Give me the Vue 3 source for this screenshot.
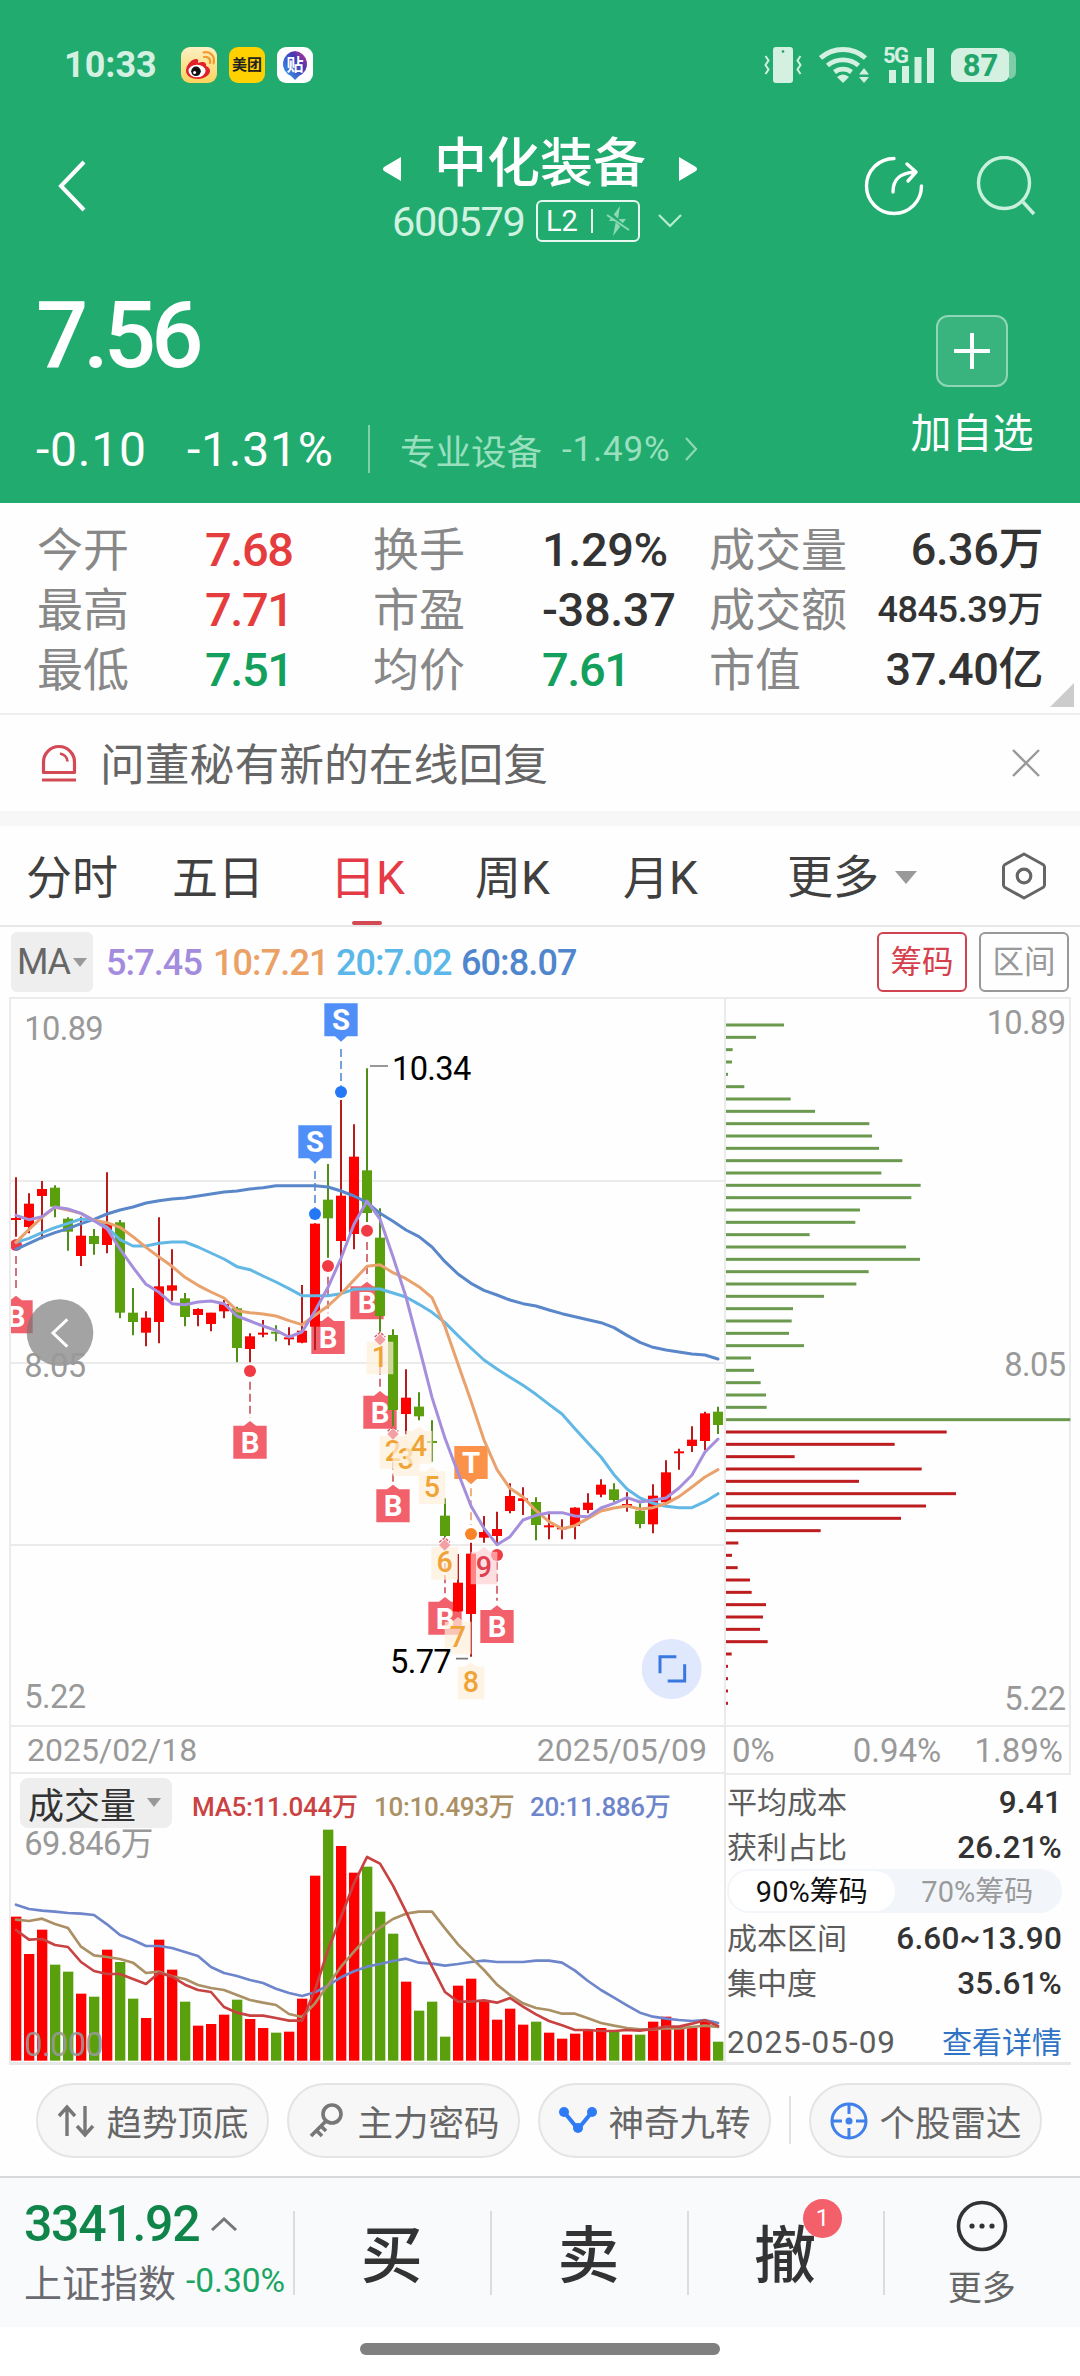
<template>
  <div class="stock-page">
    <header class="quote-header">
      <div class="status-bar">
        <div class="status-left">
          <span class="clock">10:33</span>
          <span class="app-icon weibo">
            <svg viewBox="0 0 36 36" width="36" height="36">
              <path d="M5 24C5 17 12 11 16 12c2 1 1 3 1 4 4-2 9-1 8 3 3 1 4 3 4 5 0 4-6 8-12 8S5 29 5 24z" fill="#e0202a" />
              <ellipse cx="16" cy="24" rx="8.5" ry="6.3" fill="#fff" />
              <circle cx="15" cy="24.3" r="4.8" fill="#111" />
              <circle cx="13.6" cy="25.6" r="1.5" fill="#fff" />
              <path d="M23 10c4-1 7 2 6 6M22.500 5.500c7-1.500 12 4 10 11" fill="none" stroke="#f39a2b" stroke-width="2.200" stroke-linecap="round" />
            </svg>
          </span>
          <span class="app-icon meituan">美团</span>
          <span class="app-icon tieba">
            <svg viewBox="0 0 36 36" width="36" height="36">
              <defs>
                <linearGradient id="tb" x1="1" y1="0" x2="0" y2="1">
                  <stop offset="0" stop-color="#e0338a" />
                  <stop offset=".35" stop-color="#4636b4" />
                  <stop offset="1" stop-color="#35a8f5" />
                </linearGradient>
              </defs>
              <path d="M18 4a13 13 0 0 1 4 25l-4 4-4-4A13 13 0 0 1 18 4z" fill="url(#tb)" />
              <text x="18" y="23.500" text-anchor="middle" class="tieba-text">贴</text>
            </svg>
          </span>
        </div>
        <div class="status-right">
          <svg viewBox="0 0 38 36" width="38" height="36" class="vibrate">
            <rect x="9" y="0" width="20" height="36" rx="3" fill="currentColor" />
            <circle cx="19" cy="4.500" r="1.300" fill="#1f9e66" />
            <path d="M1.500 9l3 4.500-3 4.500 3 4.500-3 4.500M36.500 9l-3 4.500 3 4.500-3 4.500 3 4.500" fill="none" stroke="currentColor" stroke-width="2" />
          </svg>
          <svg viewBox="0 0 50 36" width="50" height="36" class="wifi">
            <path d="M1.500 11a34 34 0 0 1 45 0M8.500 18.500a24 24 0 0 1 31 0M15.500 25a14 14 0 0 1 17 0" fill="none" stroke="currentColor" stroke-width="4.800" />
            <path d="M18 30q6-5 12 0l-6 6z" fill="currentColor" />
            <path d="M40 27.500l5-6.500 5 6.500zM40 30l5 6 5-6z" fill="currentColor" />
          </svg>
          <svg viewBox="0 0 52 38" width="52" height="38" class="signal">
            <text x="0" y="17" class="net-text">5G</text>
            <path d="M6 24h7v13H6zM19 20h7v17h-7zM31.500 11h7v26h-7zM44 2h7v35h-7z" fill="currentColor" />
          </svg>
          <div class="battery">87</div>
        </div>
      </div>

      <div class="nav-bar">
        <svg class="back" viewBox="0 0 30 52" width="30" height="52">
          <path d="M27 2L4 26l23 24" fill="none" stroke="currentColor" stroke-width="4" />
        </svg>
        <div class="title-box">
          <div class="title-line">
            <svg viewBox="0 0 18 26" width="18" height="26"><path d="M18 1v24L1 15q-2-2 0-4z" fill="#fff" /></svg>
            <span class="stock-name">中化装备</span>
            <svg viewBox="0 0 18 26" width="18" height="26"><path d="M0 1v24l17-10q2-2 0-4z" fill="#fff" /></svg>
          </div>
          <div class="code-line">
            <span class="stock-code">600579</span>
            <span class="level-box">
              <span>L2</span>
              <i></i>
              <svg viewBox="0 0 24 32" width="24" height="32">
                <path d="M14 1L3 16h7L7 31l13-17h-8z" fill="#8ed9b5" />
                <path d="M2 7l20 19" stroke="#22ab6f" stroke-width="4" />
                <path d="M1 10l22 15" stroke="#8ed9b5" stroke-width="2" />
              </svg>
            </span>
            <svg viewBox="0 0 24 14" width="24" height="14"><path d="M1 1l11 11L23 1" fill="none" stroke="#b9ecd2" stroke-width="2.200" /></svg>
          </div>
        </div>
        <div class="nav-icons">
          <svg viewBox="0 0 60 60" width="60" height="60">
            <path d="M30 2.500A27.500 27.500 0 1 0 57.500 30" fill="none" stroke="currentColor" stroke-width="3.400" stroke-linecap="round" />
            <path d="M29 36c0-12 6-19 22-20M43 8l9 8-8 9" fill="none" stroke="currentColor" stroke-width="3.400" stroke-linecap="round" stroke-linejoin="round" />
          </svg>
          <svg viewBox="0 0 60 60" width="60" height="60" class="search">
            <circle cx="28" cy="27" r="25.500" fill="none" stroke="currentColor" stroke-width="3.400" />
            <path d="M47 46l11 12" stroke="currentColor" stroke-width="3.400" />
          </svg>
        </div>
      </div>

      <div class="price-area">
        <div class="price-left">
          <div class="price">7.56</div>
          <div class="change-line">
            <span class="chg">-0.10</span>
            <span class="chg pct">-1.31%</span>
            <i class="sep"></i>
            <span class="industry">专业设备</span>
            <span class="industry-pct">-1.49%</span>
            <svg viewBox="0 0 14 24" width="14" height="24"><path d="M2 1l10 11L2 23" fill="none" stroke="#8ed9b5" stroke-width="2.200" /></svg>
          </div>
        </div>
        <div class="watch">
          <span class="watch-btn">
            <svg viewBox="0 0 36 36" width="36" height="36"><path d="M18 1v34M1 18h34" stroke="#fff" stroke-width="4" stroke-linecap="round" /></svg>
          </span>
          <span class="watch-text">加自选</span>
        </div>
      </div>
    </header>

    <section class="stats">
      <template v-for="s in stats" :key="s.label">
        <span class="stat-label">{{ s.label }}</span>
        <span class="stat-value" :class="s.cls">{{ s.value }}</span>
      </template>
      <i class="corner"></i>
    </section>

    <section class="notice">
      <svg viewBox="0 0 36 38" width="36" height="38">
        <path d="M2.500 28.500V18a15.500 15.500 0 0 1 31 0v10.500zM1 36h34" fill="none" stroke="#d34a55" stroke-width="3.200" stroke-linejoin="round" />
        <path d="M19 9.500q7 1.500 7.500 8" fill="none" stroke="#d34a55" stroke-width="2.600" />
      </svg>
      <span class="notice-text">问董秘有新的在线回复</span>
      <svg viewBox="0 0 28 28" width="28" height="28"><path d="M1 1l26 26M27 1L1 27" stroke="#999" stroke-width="2.400" /></svg>
    </section>

    <nav class="tabs">
      <span v-for="t in tabs" :key="t" class="tab" :class="{ active: t === activeTab }">{{ t }}</span>
      <span class="tab more">更多<i class="caret"></i></span>
      <svg viewBox="0 0 44 48" width="44" height="48">
        <path d="M22 2l19 10.500q1.500 1 1.500 2.500v18q0 1.500-1.500 2.500L22 46 3 35.500Q1.500 34.500 1.500 33V15q0-1.500 1.500-2.500z" fill="none" stroke="#666" stroke-width="3" stroke-linejoin="round" />
        <circle cx="22" cy="24" r="6.800" fill="none" stroke="#666" stroke-width="3.200" />
      </svg>
    </nav>

    <div class="ma-bar">
      <span class="ma-chip">MA<i class="caret small"></i></span>
      <span class="ma-values">
        <span v-for="m in maValues" :key="m.text" :style="{ color: m.color, width: m.w + 'px' }">{{ m.text }}</span>
      </span>
      <span class="tool-btn on">筹码</span>
      <span class="tool-btn">区间</span>
    </div>

    <div class="charts">
      <div class="chart-left">
        <!-- plot units are a third of a pixel -->
        <svg class="kline" viewBox="33 21 2139 2190" width="713" height="730">
          <path d="M33 24H2172M33 573H2172M33 1119H2172M33 1665H2172M33 2208H2172" stroke="#ebebeb" stroke-width="6" />

          <g v-for="(m, i) in markers" :key="'m' + i">
            <line :x1="m.x" :x2="m.x" :y1="m.from" :y2="m.to" :stroke="m.line" stroke-width="5" stroke-dasharray="24 12" />
            <circle v-if="m.dot" :cx="m.x" :cy="m.dot" r="18" :fill="m.dotColor" />
            <path :d="tagPath(m.x, m.y, 50, 99, m.down)" :fill="m.fill" />
            <text :x="m.x" :y="m.y + 81" text-anchor="middle" class="mark">{{ m.t }}</text>
          </g>

          <g v-for="(c, i) in candles" :key="'c' + i">
            <line :x1="px(i)" :x2="px(i)" :y1="c[0]" :y2="c[1]" :stroke="c[4] ? '#b81c1c' : '#4f8f17'" stroke-width="6" />
            <rect :x="px(i) - 15" :y="c[2]" width="30" :height="c[3] - c[2]" :fill="c[4] ? '#fe0000' : '#5a9f0c'" />
          </g>

          <g v-for="n in counts" :key="'n' + n.t">
            <path :d="tagPath(n.x, n.y, 40, 98, false)" :fill="n.t === 9 ? 'rgba(255,205,208,.65)' : 'rgba(254,239,218,.7)'" />
            <text :x="n.x" :y="n.y + 76" text-anchor="middle" class="count" :fill="n.t === 9 ? '#e04050' : '#f0a336'">{{ n.t }}</text>
            <path v-if="n.d" :d="`M${n.x} ${n.y - 23}l17 17-17 17-17-17z`" fill="#f3a0a5" />
            <path v-if="n.d" :d="`M${n.x - 16} ${n.y - 14}l16-14 16 14`" fill="none" stroke="#d4525c" stroke-width="4" stroke-dasharray="9 4" />
          </g>

          <polyline v-for="l in maLines" :key="l.color" :points="linePoints(l.pts)" fill="none" :stroke="l.color" stroke-width="9" stroke-linejoin="round" stroke-linecap="round" />

          <path d="M1110 228h54M1368 2006h36" stroke="#777" stroke-width="5" />
          <text x="1176" y="270" class="peak">10.34</text>
          <text x="1170" y="2049" class="peak">5.77</text>

          <circle cx="180" cy="1028" r="100" fill="rgba(120,120,120,.68)" />
          <path d="M202 988l-43 41 43 41" fill="none" stroke="#fff" stroke-width="9" />
          <text x="73" y="150" class="axis">10.89</text>
          <text x="73" y="1160" class="axis">8.05</text>
          <text x="73" y="2153" class="axis">5.22</text>

          <circle cx="2015" cy="2037" r="90" fill="#dfe8fc" />
          <path d="M1980 2050v-50h49M2003 2073h51v-50" fill="none" stroke="#3a78e0" stroke-width="9" />
        </svg>
        <div class="date-row">
          <span>2025/02/18</span>
          <span>2025/05/09</span>
        </div>
        <div class="vol-head">
          <span class="vol-chip">成交量<i class="caret small"></i></span>
          <span class="vm v5">MA5:11.044万</span>
          <span class="vm v10">10:10.493万</span>
          <span class="vm v20">20:11.886万</span>
        </div>
        <svg class="volume" viewBox="33 384 2139 705" width="713" height="235">
          <text x="73" y="465" class="axis">69.846万</text>
          <rect v-for="(v, i) in volumes" :key="i" :x="px(i) - 15" :y="v" width="31" :height="1082 - v" :fill="candles[i][4] ? '#fe0000' : '#5a9f0c'" />
          <polyline v-for="l in volLines" :key="l.color" :points="linePoints(l.pts)" fill="none" :stroke="l.color" stroke-width="8" stroke-linejoin="round" stroke-linecap="round" />
          <text x="73" y="1067" class="axis zero">0.000</text>
        </svg>
      </div>

      <div class="chart-right">
        <svg class="chips" viewBox="78 21 1035 2190" width="345" height="730">
          <path d="M78 24H1113M1110 24V2211M78 2208H1113" fill="none" stroke="#ebebeb" stroke-width="6" />
          <rect v-for="(c, i) in chipEnds" :key="i" x="78" :y="100.5 + i * 37" :width="c - 78" height="9" :fill="i < 33 ? '#6b9a4f' : '#bd1d1f'" />
          <text x="1096" y="132" text-anchor="end" class="axis">10.89</text>
          <text x="1096" y="1158" text-anchor="end" class="axis">8.05</text>
          <text x="1096" y="2160" text-anchor="end" class="axis">5.22</text>
        </svg>
        <div class="pct-row">
          <span>0%</span>
          <span>0.94%</span>
          <span>1.89%</span>
        </div>
        <div class="chip-info">
          <div class="info-row"><span>平均成本</span><b>9.41</b></div>
          <div class="info-row"><span>获利占比</span><b>26.21%</b></div>
          <div class="switch">
            <span class="on">90%筹码</span>
            <span>70%筹码</span>
          </div>
          <div class="info-row"><span>成本区间</span><b>6.60~13.90</b></div>
          <div class="info-row"><span>集中度</span><b>35.61%</b></div>
          <div class="info-row foot"><span class="day">2025-05-09</span><a>查看详情</a></div>
        </div>
      </div>
    </div>

    <div class="tools">
      <span class="pill">
        <svg viewBox="0 0 40 40" width="40" height="40"><path d="M11 35V6M3 15l8-9 8 9M29 5v29M21 25l8 9 8-9" fill="none" stroke="#777" stroke-width="3.400" /></svg>
        趋势顶底
      </span>
      <span class="pill">
        <svg viewBox="0 0 40 40" width="40" height="40">
          <circle cx="25" cy="13" r="9" fill="none" stroke="#777" stroke-width="3.600" />
          <path d="M19 20L4 35M9 29l6 6M14 25l5 5" fill="none" stroke="#777" stroke-width="3.600" />
        </svg>
        主力密码
      </span>
      <span class="pill">
        <svg viewBox="0 0 40 40" width="40" height="40">
          <path d="M6 11l14 17L34 11" fill="none" stroke="#2f7bf5" stroke-width="4" />
          <circle cx="6" cy="11" r="5" fill="#2f7bf5" /><circle cx="20" cy="27" r="5" fill="#2f7bf5" /><circle cx="34" cy="11" r="5" fill="#2f7bf5" />
        </svg>
        神奇九转
      </span>
      <i class="pill-sep"></i>
      <span class="pill">
        <svg viewBox="0 0 40 40" width="40" height="40">
          <circle cx="20" cy="20" r="17" fill="none" stroke="#3f80ea" stroke-width="3" />
          <path d="M20 2v11M20 27v11M2 20h11M27 20h11" stroke="#3f80ea" stroke-width="3" />
          <circle cx="20" cy="20" r="3.500" fill="#3f80ea" />
        </svg>
        个股雷达
      </span>
    </div>

    <footer class="trade-bar">
      <div class="index">
        <div class="index-line">
          <span class="index-val">3341.92</span>
          <svg viewBox="0 0 26 14" width="26" height="14"><path d="M1 13L13 2l12 11" fill="none" stroke="#777" stroke-width="3" /></svg>
        </div>
        <div class="index-line name">
          <span>上证指数</span>
          <span class="index-pct">-0.30%</span>
        </div>
      </div>
      <div class="action">买</div>
      <div class="action">卖</div>
      <div class="action"><span class="act-text">撤<em class="badge">1</em></span></div>
      <div class="action more-act">
        <svg viewBox="0 0 52 52" width="52" height="52">
          <circle cx="26" cy="26" r="23.500" fill="none" stroke="#333" stroke-width="3.600" />
          <circle cx="16" cy="26" r="2.600" fill="#333" /><circle cx="26" cy="26" r="2.600" fill="#333" /><circle cx="36" cy="26" r="2.600" fill="#333" />
        </svg>
        <span>更多</span>
      </div>
    </footer>
    <div class="home-area"><i></i></div>
  </div>
</template>

<script setup>
import { ref } from 'vue';

const activeTab = ref('日K');
const tabs = ['分时', '五日', '日K', '周K', '月K'];

const stats = [
  { label: '今开', value: '7.68', cls: 'up' },
  { label: '换手', value: '1.29%' },
  { label: '成交量', value: '6.36万', cls: 'right' },
  { label: '最高', value: '7.71', cls: 'up' },
  { label: '市盈', value: '-38.37' },
  { label: '成交额', value: '4845.39万', cls: 'right small' },
  { label: '最低', value: '7.51', cls: 'down' },
  { label: '均价', value: '7.61', cls: 'down' },
  { label: '市值', value: '37.40亿', cls: 'right' }
];

const maValues = [
  { text: '5:7.45', color: '#a38bdd', w: 107 },
  { text: '10:7.21', color: '#eba166', w: 123 },
  { text: '20:7.02', color: '#5bb7e8', w: 125 },
  { text: '60:8.07', color: '#5086cd', w: 120 }
];

// [high, low, body top, body bottom, rising]
const candles = [
  [562, 740, 684, 690, 1], [610, 730, 641, 711, 1], [573, 748, 597, 618, 1], [586, 682, 593, 650, 0],
  [682, 782, 686, 725, 0], [680, 828, 737, 798, 1], [717, 794, 738, 762, 0], [547, 790, 700, 765, 1],
  [690, 985, 697, 968, 0], [894, 1036, 968, 996, 0], [964, 1069, 983, 1028, 1], [682, 1060, 889, 996, 1],
  [778, 932, 886, 902, 1], [909, 1009, 925, 981, 0], [955, 1009, 957, 975, 1], [968, 1024, 968, 1002, 1],
  [930, 985, 942, 964, 1], [950, 1117, 955, 1074, 0], [1030, 1117, 1039, 1077, 1], [990, 1042, 1028, 1034, 1],
  [1006, 1054, 1025, 1031, 0], [1012, 1066, 1042, 1048, 1], [885, 1060, 1022, 1058, 1], [700, 1080, 701, 1010, 1],
  [522, 803, 629, 685, 0], [330, 905, 617, 753, 1], [403, 778, 500, 732, 1], [235, 696, 541, 669, 0],
  [655, 1025, 743, 978, 0], [1018, 1308, 1035, 1260, 0], [1138, 1333, 1223, 1272, 1], [1207, 1291, 1250, 1279, 0],
  [1291, 1415, 1353, 1359, 0], [1525, 1642, 1577, 1638, 0], [1692, 1865, 1778, 1864, 1], [1658, 2000, 1691, 1872, 1],
  [1578, 1658, 1626, 1643, 1], [1565, 1660, 1617, 1638, 1], [1480, 1570, 1518, 1563, 1], [1492, 1575, 1525, 1533, 1],
  [1522, 1651, 1536, 1605, 0], [1565, 1648, 1606, 1612, 1], [1588, 1648, 1612, 1618, 1], [1552, 1648, 1553, 1608, 1],
  [1510, 1570, 1538, 1560, 1], [1468, 1522, 1484, 1514, 1], [1480, 1535, 1498, 1530, 0], [1507, 1565, 1542, 1548, 1],
  [1540, 1615, 1562, 1602, 0], [1483, 1630, 1517, 1603, 1], [1411, 1545, 1447, 1537, 1], [1376, 1439, 1384, 1390, 1],
  [1309, 1386, 1349, 1368, 1], [1265, 1380, 1270, 1353, 1], [1250, 1332, 1265, 1305, 0]
];

const maLines = [
  {
    color: '#5a87c9',
    pts: [778, 760, 742, 728, 716, 701, 688, 672, 660, 651, 639, 632, 627, 624, 618, 612, 606, 603, 597, 593, 587, 587, 587, 587, 591, 603, 618, 637, 670, 694, 720, 740, 771, 815, 852, 880, 901, 915, 930, 941, 948, 960, 971, 980, 989, 998, 1013, 1036, 1057, 1072, 1080, 1086, 1092, 1095, 1107]
  },
  {
    color: '#62b8e4',
    pts: [757, 745, 728, 713, 700, 687, 690, 712, 749, 768, 768, 760, 756, 756, 771, 789, 807, 830, 839, 858, 876, 896, 917, 917, 917, 911, 898, 897, 897, 909, 921, 943, 967, 998, 1037, 1074, 1110, 1137, 1162, 1186, 1213, 1243, 1272, 1316, 1359, 1401, 1454, 1497, 1524, 1540, 1549, 1553, 1553, 1535, 1511]
  },
  {
    color: '#e9a26d',
    pts: [757, 718, 682, 652, 660, 670, 691, 698, 712, 740, 772, 801, 829, 862, 886, 906, 924, 962, 968, 972, 978, 992, 1004, 976, 948, 912, 870, 829, 824, 848, 866, 890, 923, 1010, 1122, 1233, 1350, 1439, 1495, 1521, 1562, 1595, 1616, 1607, 1585, 1563, 1554, 1548, 1557, 1553, 1541, 1520, 1491, 1461, 1439]
  },
  {
    color: '#a58fdc',
    pts: [676, 689, 680, 651, 657, 670, 692, 716, 777, 832, 883, 907, 941, 944, 936, 933, 941, 978, 993, 1008, 1021, 1041, 1026, 963, 892, 805, 703, 633, 687, 800, 921, 1070, 1222, 1345, 1448, 1548, 1615, 1664, 1640, 1590, 1576, 1568, 1568, 1578, 1580, 1554, 1540, 1523, 1536, 1530, 1524, 1494, 1455, 1386, 1347]
  }
];

const volumes = [
  650, 762, 689, 794, 815, 881, 890, 749, 786, 896, 954, 719, 809, 905, 977, 972, 944, 899, 957, 984,
  998, 995, 896, 527, 389, 438, 518, 500, 635, 701, 845, 932, 905, 1010, 857, 836, 905, 959, 926, 974,
  965, 998, 1016, 1001, 989, 984, 992, 1004, 1004, 965, 950, 985, 983, 965, 1025
];

const volLines = [
  {
    color: '#6d85ca',
    pts: [614, 627, 632, 635, 639, 641, 645, 673, 705, 720, 738, 738, 744, 756, 768, 801, 819, 828, 840, 849, 866, 879, 888, 877, 856, 832, 814, 800, 792, 783, 776, 788, 791, 797, 792, 786, 782, 786, 786, 786, 782, 782, 788, 812, 843, 870, 893, 916, 938, 950, 956, 960, 963, 960, 969]
  },
  {
    color: '#ab9065',
    pts: [659, 663, 656, 672, 684, 740, 766, 771, 777, 788, 819, 815, 829, 837, 855, 864, 870, 885, 900, 908, 915, 942, 951, 910, 855, 800, 755, 712, 683, 657, 641, 635, 635, 685, 733, 772, 810, 854, 885, 910, 924, 930, 941, 941, 955, 969, 977, 984, 988, 988, 985, 985, 981, 977, 981]
  },
  {
    color: '#c84242',
    pts: [690, 719, 717, 735, 741, 786, 813, 822, 822, 837, 852, 818, 830, 854, 870, 876, 921, 938, 947, 947, 954, 962, 962, 870, 750, 650, 550, 471, 491, 557, 635, 720, 800, 876, 905, 905, 901, 908, 894, 920, 943, 963, 976, 990, 990, 993, 993, 990, 992, 987, 980, 980, 971, 961, 978]
  }
];

const chipEnds = [
  252, 168, 98, 96, 84, 133, 272, 345, 508, 516, 537, 607, 544, 662, 634, 480, 466, 329, 618, 660,
  506, 469, 372, 279, 275, 267, 312, 153, 162, 182, 198, 200, 1111,
  740, 584, 284, 665, 477, 768, 678, 603, 362, 115, 96, 113, 150, 155, 198, 189, 180, 203, 95, 84, 84, 84, 84
];

const sell = { t: 'S', fill: '#4f8ff7', line: '#5a8ed8', dotColor: '#2478f5', down: true };
const buy = { t: 'B', fill: '#f1606b', line: '#cc5560', dotColor: '#f03a44', down: false };
const markers = [
  { ...sell, x: 1023, y: 40, from: 177, to: 287, dot: 306 },
  { ...sell, x: 945, y: 406, from: 543, to: 655, dot: 672 },
  { ...buy, x: 48, y: 931, from: 798, to: 905, dot: 765 },
  { ...buy, x: 750, y: 1307, from: 1175, to: 1284, dot: 1143 },
  { ...buy, x: 984, y: 993, from: 860, to: 970, dot: 828 },
  { ...buy, x: 1101, y: 889, from: 756, to: 865, dot: 722 },
  { ...buy, x: 1140, y: 1217, from: 1130, to: 1192 },
  { ...buy, x: 1179, y: 1498, from: 1415, to: 1475 },
  { ...buy, x: 1335, y: 1835, from: 1720, to: 1810 },
  { ...buy, x: 1491, y: 1860, from: 1715, to: 1832, dot: 1695 },
  { t: 'T', fill: '#fb924a', line: '#e9a26d', dotColor: '#f98427', down: true, x: 1413, y: 1368, from: 1495, to: 1605, dot: 1632 }
];

// nine-turn sequence numbers, d marks the ones that carry a buy dot
const counts = [
  { t: 1, x: 1140, y: 1055, d: true },
  { t: 2, x: 1179, y: 1338, d: true },
  { t: 3, x: 1218, y: 1360 },
  { t: 4, x: 1257, y: 1323 },
  { t: 5, x: 1296, y: 1444 },
  { t: 6, x: 1334, y: 1671, d: true },
  { t: 7, x: 1374, y: 1895 },
  { t: 8, x: 1413, y: 2030 },
  { t: 9, x: 1452, y: 1685 }
];

function px(i) {
  return 48 + i * 39;
}

function linePoints(pts) {
  return pts.map((y, i) => `${px(i)},${y}`).join(' ');
}

function tagPath(x, y, half, h, down) {
  if (down) {
    return `M${x - half} ${y}h${half * 2}v${h}h${-(half - 18)}l-18 16-18-16h${-(half - 18)}z`;
  }
  return `M${x - half} ${y}h${half - 18}l18-14 18 14h${half - 18}v${h}h${-half * 2}z`;
}
</script>

<style>
html,
body {
  margin: 0;
  background: #fff;
}
</style>

<style scoped>
.stock-page {
  width: 1080px;
  height: 2376px;
  overflow: hidden;
  background: #fefefe;
  font-family: Roboto, 'Noto Sans CJK SC', sans-serif;
  color: #333;
  white-space: nowrap;
}

.stock-page svg {
  display: block;
  flex: none;
}

i,
em,
b {
  font-style: normal;
  font-weight: 400;
}

/* header */
.quote-header {
  height: 503px;
  background: #22ab6f;
  color: #fff;
}

.status-bar {
  height: 130px;
  display: flex;
  align-items: center;
  justify-content: space-between;
  padding: 0 63px 0 64px;
  box-sizing: border-box;
  color: #d3f0e1;
}

.status-left,
.status-right {
  display: flex;
  align-items: center;
}

.clock {
  width: 117px;
  font-size: 36px;
  font-weight: 700;
  line-height: 40px;
}

.app-icon {
  width: 36px;
  height: 36px;
  border-radius: 9px;
  margin-right: 12px;
  overflow: hidden;
}

.weibo {
  background: linear-gradient(#fdf0c4, #fbd35c);
}

.meituan {
  background: #ffd100;
  color: #222;
  font-size: 15px;
  font-weight: 700;
  line-height: 36px;
  text-align: center;
}

.tieba {
  background: #fff;
}

.tieba-text {
  font-size: 17px;
  font-weight: 700;
  fill: #fff;
}

.vibrate {
  margin-right: 17px;
}

.wifi {
  margin-right: 14px;
}

.stock-page .signal,
.stock-page .volume {
  overflow: visible;
}

.signal {
  margin-right: 16px;
}

.net-text {
  font-size: 22px;
  font-weight: 700;
  letter-spacing: -1.5px;
  fill: currentColor;
}

.battery {
  position: relative;
  width: 59px;
  height: 34px;
  margin-right: 7px;
  border-radius: 9px;
  background: #d3f0e1;
  color: #22a56b;
  font-size: 31px;
  font-weight: 700;
  line-height: 35px;
  text-align: center;
}

.battery::after {
  content: '';
  position: absolute;
  left: 58px;
  top: 3px;
  width: 7px;
  height: 28px;
  border-radius: 0 8px 8px 0;
  background: #7fcca8;
}

.nav-bar {
  height: 118px;
  display: grid;
  grid-template-columns: 270px 1fr 270px;
}

.back {
  margin: 30px 0 0 57px;
}

.title-box {
  display: flex;
  flex-direction: column;
  align-items: center;
}

.title-line {
  height: 66px;
  display: flex;
  align-items: center;
  gap: 33px;
}

.title-line svg {
  margin-top: 12px;
}

.stock-name {
  padding-top: 2px;
  font-size: 53px;
  font-weight: 500;
  line-height: 66px;
}

.code-line {
  height: 50px;
  display: flex;
  align-items: center;
  margin-right: 6px;
}

.stock-code {
  width: 144px;
  padding-top: 2px;
  font-size: 41.5px;
  letter-spacing: -1.2px;
  line-height: 48px;
  color: #d0f2e0;
}

.level-box {
  width: 104px;
  height: 42px;
  box-sizing: border-box;
  margin: 0 18px 0 0;
  padding: 0 8px;
  border: 2px solid #e6f8ef;
  border-radius: 6px;
  display: flex;
  align-items: center;
  justify-content: space-between;
  font-size: 29px;
  line-height: 38px;
}

.level-box i {
  width: 2px;
  height: 24px;
  background: #e6f8ef;
}

.nav-icons {
  display: flex;
  gap: 52px;
  padding: 26px 0 0 54px;
}

.search {
  color: #c9f0dc;
}

.price-area {
  display: flex;
  justify-content: space-between;
}

.price-left {
  padding-left: 36px;
}

.price {
  margin-top: 39px;
  height: 98px;
  font-size: 92px;
  font-weight: 500;
  line-height: 98px;
  letter-spacing: -5px;
}

.change-line {
  margin-top: 36px;
  height: 56px;
  display: flex;
  align-items: center;
}

.chg {
  width: 151px;
  font-size: 48px;
  letter-spacing: 0.8px;
}

.chg.pct {
  width: 181px;
}

.sep {
  width: 2px;
  height: 48px;
  margin-right: 30px;
  background: #7fd1aa;
}

.industry {
  font-size: 35.5px;
  color: #9ae0bf;
}

.industry-pct {
  width: 122px;
  margin-left: 20px;
  font-size: 35px;
  letter-spacing: 0.8px;
  color: #9ae0bf;
}

.watch {
  width: 124px;
  margin: 67px 46px 0 0;
  display: flex;
  flex-direction: column;
  align-items: center;
}

.watch-btn {
  width: 72px;
  height: 72px;
  box-sizing: border-box;
  border: 2px solid #90d6b6;
  border-radius: 12px;
  background: #3ab47f;
  display: flex;
  align-items: center;
  justify-content: center;
}

.watch-text {
  margin-top: 19px;
  font-size: 41px;
  line-height: 56px;
}

/* stats */
.stats {
  position: relative;
  height: 212px;
  box-sizing: border-box;
  padding: 17px 37px 0 37px;
  border-bottom: 2px solid #eee;
  display: grid;
  grid-template-columns: 168px 168px 169px 167px 150px 1fr;
  grid-auto-rows: 60px;
  line-height: 60px;
}

.stat-label {
  font-size: 46px;
  color: #888;
}

.stat-value {
  font-size: 47px;
  font-weight: 500;
  letter-spacing: -0.4px;
}

.up,
.down {
  letter-spacing: -1.4px;
}

.up {
  color: #e53d3d;
}

.down {
  color: #12a05c;
}

.right {
  display: flex;
  justify-content: flex-end;
  font-size: 45px;
}

.right.small {
  font-size: 36px;
}

.corner {
  position: absolute;
  right: 6px;
  bottom: 6px;
  border-left: 24px solid transparent;
  border-bottom: 24px solid #ccc;
}

/* notice */
.notice {
  height: 96px;
  padding: 0 40px 0 41px;
  border-bottom: 15px solid #f7f7f7;
  display: flex;
  align-items: center;
}

.notice-text {
  flex: 1;
  margin-left: 23px;
  padding-top: 5px;
  font-size: 44.8px;
  line-height: 60px;
  color: #666;
}

/* tabs */
.tabs {
  height: 101px;
  box-sizing: border-box;
  padding: 0 34px 0 26px;
  border-bottom: 2px solid #e8e8e8;
  display: grid;
  grid-template-columns: 146px 161px 142px 148px 164px 1fr 44px;
  align-items: center;
}

.tab {
  position: relative;
  height: 99px;
  box-sizing: border-box;
  padding-top: 4px;
  justify-self: start;
  font-size: 46px;
  line-height: 97px;
  color: #404040;
}

.tab:nth-child(3) {
  margin-left: -3px;
}

.tab.active {
  color: #e43b47;
}

.tab.active::after {
  content: '';
  position: absolute;
  left: 50%;
  bottom: 0;
  width: 30px;
  height: 4px;
  margin-left: -15px;
  border-radius: 2px;
  background: #d34a55;
}

.more {
  display: flex;
  align-items: center;
}

.caret {
  margin-left: 16px;
  border: 11px solid transparent;
  border-top: 13px solid #999;
  border-bottom: 0;
}

.caret.small {
  margin-left: 3px;
  border-width: 9px 7px 0;
}

/* MA bar */
.ma-bar {
  height: 70px;
  padding: 0 11px;
  display: flex;
  align-items: center;
}

.ma-chip {
  width: 82px;
  height: 60px;
  border-radius: 6px;
  background: #eee;
  display: flex;
  align-items: center;
  justify-content: center;
  font-size: 36px;
  letter-spacing: -1px;
  color: #666;
}

.ma-values {
  flex: 1;
  display: flex;
  margin-left: 13px;
  padding-top: 2px;
  font-size: 36px;
  font-weight: 500;
  letter-spacing: -0.9px;
}

.tool-btn {
  width: 90px;
  height: 60px;
  box-sizing: border-box;
  margin-left: 12px;
  border: 2px solid #999;
  border-radius: 6px;
  font-size: 31.5px;
  line-height: 58px;
  text-align: center;
  color: #999;
}

.tool-btn.on {
  border-color: #cf4450;
  color: #d5404c;
}

/* charts */
.charts {
  display: flex;
  height: 1068px;
  box-sizing: border-box;
  margin: 0 9px;
  border-bottom: 3px solid #e8e8e8;
}

.chart-left {
  width: 717px;
  box-sizing: border-box;
  border: 2px solid #ebebeb;
  border-width: 0 2px;
}

.axis {
  font-size: 98px;
  letter-spacing: -2px;
  fill: #999;
}

.axis.zero {
  fill-opacity: .9;
}

.peak {
  font-size: 98px;
  letter-spacing: -2px;
  fill: #000;
}

.mark {
  font-size: 88px;
  font-weight: 700;
  fill: #fff;
}

.count {
  font-size: 86px;
  font-weight: 500;
}

.date-row {
  height: 47px;
  padding: 0 17px 0 16px;
  box-sizing: border-box;
  border-bottom: 2px solid #ebebeb;
  display: flex;
  align-items: center;
  justify-content: space-between;
  font-size: 32px;
  color: #999;
}

.vol-head {
  height: 54px;
  display: flex;
  align-items: center;
}

.vol-chip {
  width: 152px;
  height: 50px;
  margin: 3px 20px 0 9px;
  border-radius: 8px;
  background: #eee;
  display: flex;
  align-items: center;
  padding-left: 8px;
  box-sizing: border-box;
  font-size: 36px;
  color: #333;
}

.vol-chip .caret {
  margin-left: 11px;
}

.vm {
  margin-top: 6px;
  font-size: 26px;
  font-weight: 500;
  letter-spacing: -0.3px;
}

.v5 {
  width: 182px;
  color: #ca4242;
}

.v10 {
  width: 156px;
  color: #ab9065;
}

.v20 {
  color: #6d85ca;
}

.chart-right {
  width: 345px;
}

.pct-row {
  height: 48px;
  box-sizing: border-box;
  padding: 0 6px;
  border: 2px solid #ebebeb;
  border-width: 0 2px 2px 0;
  display: flex;
  align-items: center;
  font-size: 33px;
  color: #999;
}

.pct-row span:nth-child(2) {
  margin: 0 auto 0 78px;
}

.chip-info {
  padding: 5px 9px 0 1px;
}

.info-row {
  height: 45px;
  display: flex;
  align-items: center;
  justify-content: space-between;
  font-size: 30px;
  line-height: 45px;
  color: #5c5c5c;
}

.info-row b {
  font-size: 31.5px;
  font-weight: 500;
  letter-spacing: 0.2px;
  color: #333;
}

.info-row .day {
  font-size: 31.5px;
  letter-spacing: 1px;
}

.info-row a {
  color: #3073c4;
}

.info-row.foot {
  margin-top: 14px;
}

.switch {
  height: 44px;
  margin: -1px 0 3px;
  padding: 2px;
  box-sizing: border-box;
  border-radius: 22px;
  background: #f2f6fa;
  display: flex;
  font-size: 29px;
  line-height: 42px;
  text-align: center;
  color: #9a9a9a;
}

.switch span {
  flex: 1;
}

.switch .on {
  border-radius: 20px;
  background: #fff;
  color: #111;
}

/* tool pills */
.tools {
  height: 111px;
  box-sizing: border-box;
  padding: 18px 36px 0;
  display: flex;
  gap: 18px;
}

.pill {
  width: 233px;
  height: 75px;
  box-sizing: border-box;
  border: 2px solid #e4e4e4;
  border-radius: 38px;
  background: #f7f7f7;
  display: flex;
  align-items: center;
  justify-content: center;
  gap: 10px;
  font-size: 35.5px;
  color: #666;
}

.pill-sep {
  width: 2px;
  height: 48px;
  margin-top: 13px;
  background: #e2e2e2;
}

/* trade bar */
.trade-bar {
  height: 151px;
  box-sizing: border-box;
  border-top: 2px solid #d8d8da;
  background: #f9fafc;
  display: flex;
}

.index {
  width: 294px;
  box-sizing: border-box;
  padding: 18px 0 0 24px;
}

.index-line {
  height: 56px;
  display: flex;
  align-items: center;
  gap: 12px;
}

.index-val {
  font-size: 50px;
  font-weight: 500;
  letter-spacing: -1.3px;
  color: #10854a;
}

.index-line.name {
  height: 56px;
  gap: 10px;
  font-size: 38px;
  color: #6a6a70;
}

.index-pct {
  font-size: 33.5px;
  color: #1aa562;
}

.action {
  position: relative;
  width: 197px;
  padding-top: 4px;
  box-sizing: border-box;
  font-size: 62px;
  font-weight: 500;
  line-height: 150px;
  text-align: center;
}

.action::before {
  content: '';
  position: absolute;
  left: 0;
  top: 33px;
  width: 2px;
  height: 84px;
  background: #dcdcde;
}

.act-text {
  position: relative;
}

.badge {
  position: absolute;
  right: -26px;
  top: -21px;
  width: 39px;
  height: 39px;
  border-radius: 50%;
  background: #f4606a;
  color: #fff;
  font-size: 24px;
  line-height: 39px;
  text-align: center;
}

.more-act {
  display: flex;
  flex-direction: column;
  align-items: center;
  padding-top: 22px;
  font-size: 34px;
  font-weight: 400;
  line-height: 50px;
  color: #666;
}

.more-act span {
  margin-top: 11px;
}

.home-area {
  height: 49px;
  padding-top: 16px;
  box-sizing: border-box;
  display: flex;
  justify-content: center;
  background: #fff;
}

.home-area i {
  width: 360px;
  height: 12px;
  border-radius: 6px;
  background: #808080;
}
</style>
